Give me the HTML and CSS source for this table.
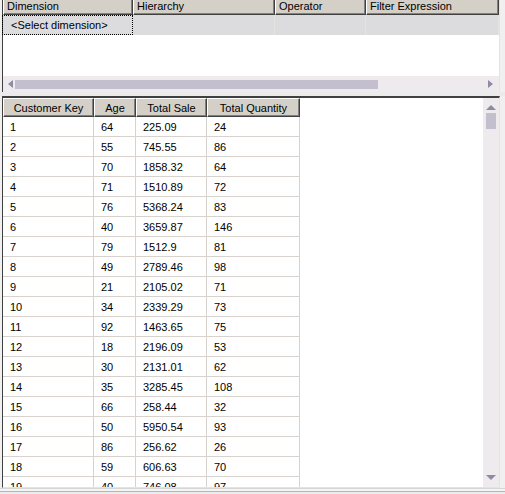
FILE: index.html
```html
<!DOCTYPE html>
<html>
<head>
<meta charset="utf-8">
<link rel="stylesheet" href="styles.css">
</head>
<body>
<div class="app">
  <div class="filter-pane">
    <div class="fgrid">
      <div class="fhead">
        <div class="hcell c-dim">Dimension</div>
        <div class="hcell c-hier">Hierarchy</div>
        <div class="hcell c-op">Operator</div>
        <div class="hcell c-expr">Filter Expression</div>
      </div>
      <div class="frow">
        <div class="fcell c-dim focus">&lt;Select dimension&gt;</div>
        <div class="fcell c-hier"></div>
        <div class="fcell c-op"></div>
        <div class="fcell c-expr"></div>
      </div>
    </div>
    <div class="hscroll">
      <span class="arrow arrow-left"></span>
      <div class="htrack"><div class="hthumb"></div></div>
      <span class="arrow arrow-right"></span>
    </div>
  </div>
  <div class="splitter"></div>
  <div class="data-pane">
    <div class="dgrid">
      <table class="dtable">
        <colgroup>
          <col class="k-key"><col class="k-age"><col class="k-sale"><col class="k-qty">
        </colgroup>
        <thead>
          <tr><th>Customer Key</th><th>Age</th><th>Total Sale</th><th>Total Quantity</th></tr>
        </thead>
        <tbody>
          <tr><td>1</td><td>64</td><td>225.09</td><td>24</td></tr>
          <tr><td>2</td><td>55</td><td>745.55</td><td>86</td></tr>
          <tr><td>3</td><td>70</td><td>1858.32</td><td>64</td></tr>
          <tr><td>4</td><td>71</td><td>1510.89</td><td>72</td></tr>
          <tr><td>5</td><td>76</td><td>5368.24</td><td>83</td></tr>
          <tr><td>6</td><td>40</td><td>3659.87</td><td>146</td></tr>
          <tr><td>7</td><td>79</td><td>1512.9</td><td>81</td></tr>
          <tr><td>8</td><td>49</td><td>2789.46</td><td>98</td></tr>
          <tr><td>9</td><td>21</td><td>2105.02</td><td>71</td></tr>
          <tr><td>10</td><td>34</td><td>2339.29</td><td>73</td></tr>
          <tr><td>11</td><td>92</td><td>1463.65</td><td>75</td></tr>
          <tr><td>12</td><td>18</td><td>2196.09</td><td>53</td></tr>
          <tr><td>13</td><td>30</td><td>2131.01</td><td>62</td></tr>
          <tr><td>14</td><td>35</td><td>3285.45</td><td>108</td></tr>
          <tr><td>15</td><td>66</td><td>258.44</td><td>32</td></tr>
          <tr><td>16</td><td>50</td><td>5950.54</td><td>93</td></tr>
          <tr><td>17</td><td>86</td><td>256.62</td><td>26</td></tr>
          <tr><td>18</td><td>59</td><td>606.63</td><td>70</td></tr>
          <tr><td>19</td><td>40</td><td>746.08</td><td>97</td></tr>
        </tbody>
      </table>
    </div>
    <div class="vscroll">
      <span class="arrow arrow-up"></span>
      <div class="vtrack"><div class="vthumb"></div></div>
      <span class="arrow arrow-down"></span>
    </div>
  </div>
  <div class="status"></div>
</div>
</body>
</html>
```
FILE: styles.css
```css
* { box-sizing: border-box; }
html, body {
  margin: 0;
  padding: 0;
  background: #f0f0f0;
}
body {
  width: 505px;
  height: 494px;
  overflow: hidden;
  font-family: "Liberation Sans", Arial, sans-serif;
  font-size: 11px;
  color: #000;
}
.app {
  display: flex;
  flex-direction: column;
  height: 494px;
}

/* ---------- filter pane ---------- */
.filter-pane {
  margin-left: 2px;
  width: 498px;
  height: 92px;
  display: flex;
  flex-direction: column;
  border-left: 1px solid #404040;
  border-right: 1px solid #e3e3e3;
  background: #fff;
}
.fgrid { flex: 1; background: #fff; }
.fhead, .frow { display: flex; }
.c-dim { width: 130px; }
.c-hier { width: 142px; }
.c-op { width: 91px; }
.c-expr { width: 133px; }
.hcell {
  height: 15px;
  line-height: 13px;
  padding-left: 3px;
  background: #d4d0c8;
  border-left: 1px solid #fff;
  border-right: 1px solid #404040;
  border-bottom: 1px solid #404040;
  box-shadow: inset -1px -1px 0 #808080;
  white-space: nowrap;
  overflow: hidden;
}
.frow { height: 20px; background: #dcdcde; }
.fcell {
  height: 20px;
  line-height: 20px;
  border-right: 1px solid #e6e2e0;
}
.fcell.focus {
  margin-left: -1px;
  width: 131px;
  outline: 1px dotted #000;
  outline-offset: -1px;
  padding-left: 9px;
}
.hscroll {
  height: 16px;
  display: flex;
  align-items: center;
  background: #eeeaee;
}
.htrack { flex: 1; height: 16px; display: flex; align-items: center; padding-left: 2px; }
.hthumb { width: 363px; height: 9px; background: #c3bfcf; }
.arrow { display: block; width: 0; height: 0; flex: none; }
.arrow-left {
  margin-left: 5px;
  border-top: 4px solid transparent;
  border-bottom: 4px solid transparent;
  border-right: 5px solid #8e8ca4;
}
.arrow-right {
  margin-right: 6px;
  border-top: 4px solid transparent;
  border-bottom: 4px solid transparent;
  border-left: 5px solid #8e8ca4;
}

.splitter {
  height: 4px;
  background: #ebebeb;
}

/* ---------- data pane ---------- */
.data-pane {
  margin-left: 2px;
  width: 498px;
  height: 392px;
  display: flex;
  border-top: 2px solid #404040;
  border-left: 1px solid #404040;
  border-right: 1px solid #e3e3e3;
  border-bottom: 1px solid #e3e3e3;
  background: #fff;
}
.dgrid { flex: 1; overflow: hidden; background: #fff; }
.dtable {
  border-collapse: separate;
  border-spacing: 0;
  table-layout: fixed;
  width: 297px;
}
.k-key { width: 91px; }
.k-age { width: 42px; }
.k-sale { width: 71px; }
.k-qty { width: 93px; }
.dtable th {
  height: 19px;
  padding: 0;
  font-weight: normal;
  text-align: center;
  background: #d4d0c8;
  border-top: 1px solid #fff;
  border-left: 1px solid #fff;
  border-right: 1px solid #404040;
  border-bottom: 1px solid #404040;
  box-shadow: inset -1px -1px 0 #808080;
  white-space: nowrap;
  overflow: hidden;
}
.dtable td {
  height: 20px;
  padding: 0 0 0 7px;
  border-right: 1px solid #d8d2ce;
  border-bottom: 1px solid #d8d2ce;
  white-space: nowrap;
}
.vscroll {
  width: 16px;
  background: #eeeaee;
  display: flex;
  flex-direction: column;
  align-items: center;
}
.vtrack { flex: 1; width: 16px; display: flex; justify-content: center; }
.vthumb { width: 10px; height: 16px; margin-top: 3px; background: #c3bfcf; }
.arrow-up {
  margin-top: 7px;
  border-left: 5px solid transparent;
  border-right: 5px solid transparent;
  border-bottom: 5px solid #8e8ca4;
}
.arrow-down {
  margin-bottom: 7px;
  border-left: 5px solid transparent;
  border-right: 5px solid transparent;
  border-top: 5px solid #8e8ca4;
}
.status {
  flex: 1;
  border-top: 1px solid #d6d6d6;
  background: linear-gradient(#f4f4f4 0 2px, #a9b6cf 2px 3px, #ececec 3px);
}
```
